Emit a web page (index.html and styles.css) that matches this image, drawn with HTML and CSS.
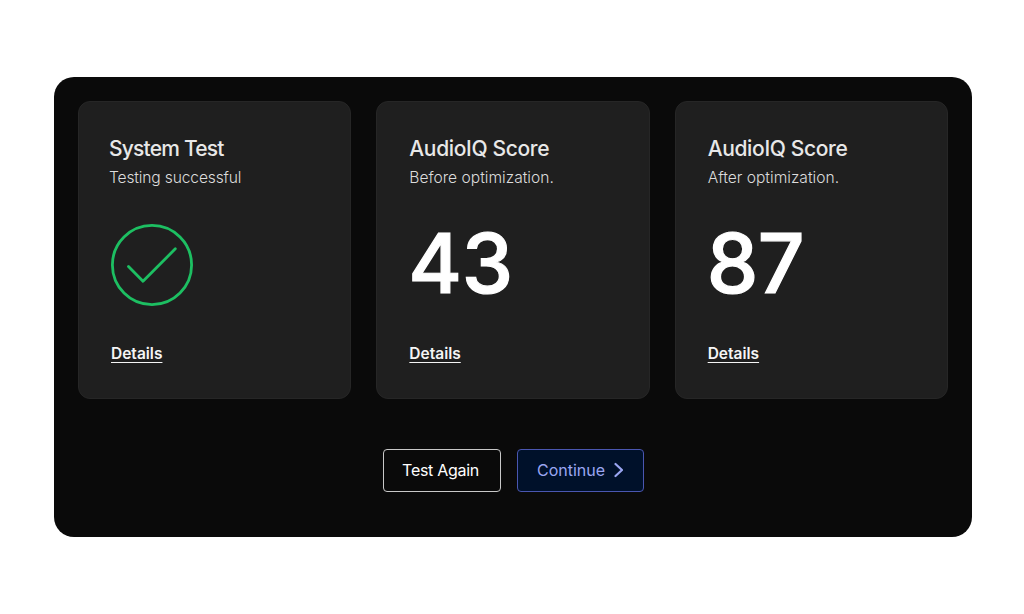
FILE: index.html
```html
<!DOCTYPE html>
<html lang="en">
<head>
    <meta charset="UTF-8">
    <meta name="viewport" content="width=device-width, initial-scale=1.0">
    <title>AudioIQ Test Results</title>
    <link rel="stylesheet" href="styles.css">
</head>
<body>
    <main class="panel">
        <section class="cards">
            <div class="card card-system">
                <h3>System Test</h3>
                <p class="sub">Testing successful</p>
                <div class="result">
                    <svg class="check" width="82" height="82" viewBox="0 0 82 82" fill="none" stroke="#1dbf62" stroke-width="2.8" stroke-linecap="round" stroke-linejoin="round" aria-hidden="true">
                        <circle cx="41" cy="41" r="39.6"/>
                        <path d="M17.5 42.5 L32 57.3 L64.3 24.8"/>
                    </svg>
                </div>
                <a class="details" href="#">Details</a>
            </div>
            <div class="card">
                <h3>AudioIQ Score</h3>
                <p class="sub">Before optimization.</p>
                <div class="result score">43</div>
                <a class="details" href="#">Details</a>
            </div>
            <div class="card">
                <h3>AudioIQ Score</h3>
                <p class="sub">After optimization.</p>
                <div class="result score">87</div>
                <a class="details" href="#">Details</a>
            </div>
        </section>
        <div class="actions">
            <button type="button" class="btn btn-outline"><span>Test Again</span></button>
            <button type="button" class="btn btn-primary"><span>Continue</span>
                <svg width="10" height="16" viewBox="0 0 10 16" fill="none" stroke="#9aa6f2" stroke-width="2.2" stroke-linecap="round" stroke-linejoin="round" aria-hidden="true">
                    <path d="M2.5 2 L9 8 L2.5 14"/>
                </svg>
            </button>
        </div>
    </main>
</body>
</html>
```

FILE: styles.css
```css
* {
    margin: 0;
    padding: 0;
    box-sizing: border-box;
}

body {
    font-family: 'Inter', sans-serif;
    background-color: #ffffff;
    padding: 77px 52px 77px 54px;
}

/* Main panel */
.panel {
    height: 460px;
    padding: 24px 24px 45px;
    background-color: #0a0a0a;
    border-radius: 20px;
}

.cards {
    display: grid;
    grid-template-columns: repeat(3, 1fr);
    gap: 25px;
}

.card {
    height: 298px;
    padding: 35px 20px 0 32px;
    background-color: #1f1f1f;
    border: 1px solid #262626;
    border-radius: 12px;
    display: flex;
    flex-direction: column;
}

.card h3 {
    font-size: 21px;
    line-height: 24px;
    font-weight: 500;
    letter-spacing: -0.35px;
    color: #e8e8e8;
}

.sub {
    margin-top: 7px;
    font-size: 15.6px;
    line-height: 20px;
    font-weight: 300;
    letter-spacing: 0;
    color: #dcdcdc;
}

.card-system h3,
.card-system .sub {
    margin-left: -2px;
}

.card-system h3 {
    letter-spacing: -0.8px;
}

.card-system .sub {
    letter-spacing: -0.15px;
}

.result {
    height: 84px;
    margin-top: 37px;
}

.check {
    display: block;
    margin-top: -1px;
}

.score {
    margin-left: -1px;
    font-size: 82px;
    line-height: 78px;
    font-weight: 500;
    letter-spacing: -0.5px;
    -webkit-text-stroke: 1.2px #ffffff;
    color: #ffffff;
}

.details {
    margin-top: 35px;
    align-self: flex-start;
    font-size: 15.5px;
    line-height: 20px;
    font-weight: 600;
    color: #f5f5f5;
    text-decoration: underline;
    text-underline-offset: 3px;
}

/* Buttons */
.actions {
    margin-top: 50px;
    display: flex;
    justify-content: center;
    gap: 16px;
}

.btn {
    height: 43px;
    padding-bottom: 2px;
    border-radius: 4px;
    font-family: inherit;
    font-size: 16px;
    font-weight: 400;
    display: flex;
    align-items: center;
    justify-content: center;
    gap: 8px;
}

.btn-outline {
    width: 118px;
    padding-right: 2px;
    background-color: #0a0a0a;
    border: 1.5px solid #c8c8c8;
    color: #ffffff;
    letter-spacing: -0.3px;
}

.btn-primary {
    width: 127px;
    background-color: #00112a;
    border: 1.5px solid #4a56b0;
    color: #9aa6f2;
}
```
